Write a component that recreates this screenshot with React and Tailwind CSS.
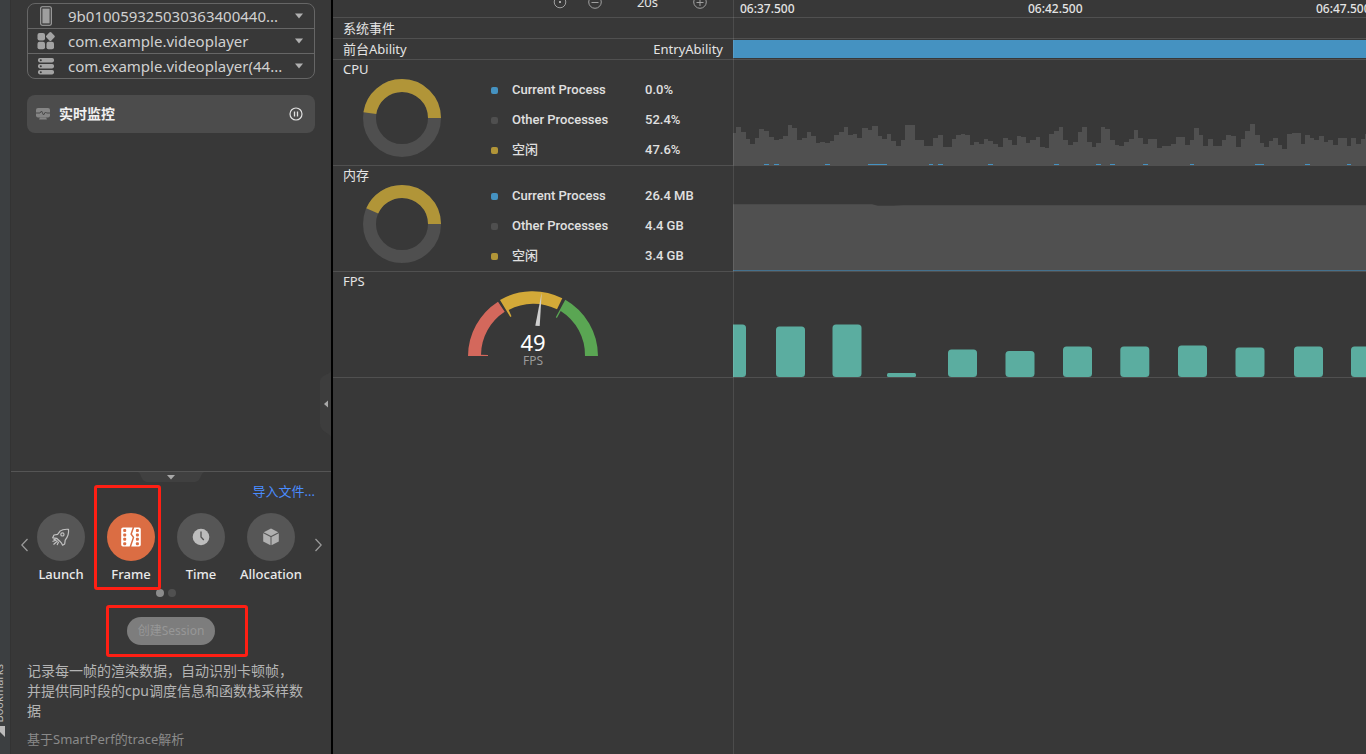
import React from "react";

const ZH = "font-['Noto_Sans','Noto_Sans_CJK_SC',sans-serif]";

// Pairs of [x, top] in thirds of a pixel, measured from the start of the track.
const CPU_STEPS = [
  [0, 400], [9, 382], [24, 396], [39, 417], [51, 431], [66, 414], [78, 386], [93, 392], [108, 412], [123, 420],
  [138, 418], [150, 408], [165, 374], [178, 384], [192, 419], [207, 415], [222, 396], [234, 409], [249, 428],
  [261, 425], [276, 428], [291, 423], [303, 404], [318, 396], [333, 380], [345, 405], [360, 403], [372, 413],
  [387, 384], [405, 390], [417, 377], [435, 407], [447, 417], [462, 403], [474, 423], [489, 437], [504, 421],
  [516, 374], [531, 374], [546, 420], [561, 421], [573, 439], [588, 439], [600, 414], [615, 406], [630, 442],
  [645, 442], [657, 418], [669, 404], [684, 401], [697, 404], [711, 436], [723, 425], [738, 433], [753, 418],
  [765, 424], [780, 433], [795, 442], [810, 415], [825, 421], [837, 436], [852, 408], [864, 412], [879, 428],
  [891, 420], [909, 412], [921, 442], [936, 444], [948, 402], [963, 392], [978, 382], [990, 419], [1005, 434],
  [1020, 425], [1035, 397], [1047, 382], [1062, 425], [1077, 442], [1089, 429], [1104, 382], [1116, 388],
  [1131, 420], [1146, 435], [1158, 439], [1173, 427], [1188, 418], [1203, 389], [1215, 414], [1230, 433],
  [1245, 416], [1260, 416], [1272, 443], [1287, 437], [1299, 437], [1314, 433], [1329, 411], [1344, 411],
  [1356, 436], [1371, 419], [1383, 384], [1398, 406], [1410, 437], [1425, 418], [1440, 438], [1455, 438],
  [1467, 420], [1479, 406], [1494, 408], [1509, 441], [1524, 418], [1536, 392], [1551, 371], [1566, 404],
  [1581, 429], [1593, 442], [1608, 423], [1620, 415], [1635, 434], [1647, 446], [1662, 403], [1677, 400],
  [1692, 400], [1704, 431], [1716, 406], [1731, 414], [1743, 419], [1758, 409], [1773, 426], [1785, 420],
  [1800, 436], [1815, 413], [1830, 415], [1842, 439], [1854, 415], [1869, 431], [1884, 418], [1896, 402],
];

const CPU_MARKS = [
  [31, 5], [41, 5], [92, 5], [135, 19], [196, 4], [205, 5], [255, 5], [321, 5],
  [363, 5], [377, 5], [410, 5], [457, 4], [522, 9], [572, 5], [614, 4],
];

const FPS_BARS = [
  [-16, 52.5], [43, 50.5], [99.5, 52.5], [154, 4], [215, 27.5], [272.5, 26],
  [330, 30.5], [387.3, 30.5], [445, 31.5], [502.5, 29.5], [561, 30.5], [618, 30.5],
];

const cpuPath =
  "M0 106" + CPU_STEPS.map(([x, y]) => `H${x / 3}V${y / 3 - 60}`).join("") + "H633V106Z";

function Caret({ className }) {
  return (
    <svg viewBox="0 0 8 6" aria-hidden="true" className={className}>
      <path d="M0 0.5H8L4 5.5Z" fill="currentColor" />
    </svg>
  );
}

const PhoneIcon = () => (
  <svg viewBox="0 0 18 20" className="h-5 w-[18px]" aria-hidden="true">
    <rect x="3.7" y="0.7" width="10.6" height="18.6" rx="1.5" fill="none" stroke="#a9a9a9" strokeWidth="1.1" />
    <rect x="5.4" y="2.6" width="7.2" height="14.800" fill="#9f9f9f" />
  </svg>
);
const AppsIcon = () => (
  <svg viewBox="0 0 18 18" className="size-[18px]" fill="#a3a3a3" aria-hidden="true">
    <rect x="0.5" y="1" width="7.5" height="7.5" rx="2" />
    <rect x="0.5" y="9.7" width="7.5" height="7.5" rx="2" />
    <rect x="9.5" y="9.7" width="7.5" height="7.5" rx="2" />
    <rect x="9.9" y="1" width="7" height="7" rx="1.5" transform="rotate(45 13.4 4.5)" />
  </svg>
);
const StackIcon = () => (
  <svg viewBox="0 0 18 18" className="size-[18px]" aria-hidden="true">
    {[1, 7, 13].map((y) => (
      <g key={y}>
        <rect x="1" y={y} width="16" height="4.4" rx="1.8" fill="#a3a3a3" />
        <circle cx="3.8" cy={y + 2.2} r="1" fill="#383838" />
      </g>
    ))}
  </svg>
);

const DEVICES = [
  { label: "设备", text: "9b010059325030363400440...", Icon: PhoneIcon },
  { label: "应用", text: "com.example.videoplayer", Icon: AppsIcon },
  { label: "进程", text: "com.example.videoplayer(44...", Icon: StackIcon },
];

const RocketIcon = () => (
  <svg viewBox="0 0 20 20" className="size-5" fill="none" stroke="#c2c2c2" strokeWidth="1.2" strokeLinejoin="round" strokeLinecap="round" aria-hidden="true">
    <path d="M17.500 2.300C14 2.100 11 2.500 9.300 3.900L6.600 7.300 3 8 1.700 10.800 5.600 11.300 8.800 14.200 10.300 15.800 11.600 18.200 13.700 17 14.200 13.200C16.800 10 18 6.500 17.500 2.300Z" />
    <circle cx="11.400" cy="7.400" r="1.600" />
    <path d="M5.300 13.200L2 14.300M6.300 14.200L2.800 17.200M7.400 15.200L6.300 17.600M4.400 12.200L3 12.600" />
  </svg>
);
const FilmIcon = () => (
  <svg viewBox="0 0 20 20" className="size-5" aria-hidden="true">
    <path d="M2 .5H11.600L9.300 7.200 11.700 10.500 8.600 19.500H2A1.800 1.800 0 0 1 .2 17.700V2.300A1.800 1.800 0 0 1 2 .5Z" fill="#fff" />
    <path d="M13.200 .5H18A1.800 1.800 0 0 1 19.800 2.300V17.700A1.800 1.800 0 0 1 18 19.500H10.200L13.300 10.300 11 7Z" fill="#fff" />
    {[2, 6.400, 10.800, 15.200].map((y) => (
      <g key={y} fill="#db6d43">
        <rect x="2.200" y={y} width="3" height="3" rx="1" />
        <rect x="14.900" y={y} width="3" height="3" rx="1" />
      </g>
    ))}
  </svg>
);
const ClockIcon = () => (
  <svg viewBox="0 0 20 20" className="size-5" aria-hidden="true">
    <circle cx="10" cy="10" r="8.300" fill="#bdbdbd" />
    <path d="M10 4.500V10L12.800 13" fill="none" stroke="#555" strokeWidth="1.300" />
  </svg>
);
const CubeIcon = () => (
  <svg viewBox="0 0 20 20" className="size-5" fill="#b0b0b0" aria-hidden="true">
    <path d="M10 1.500L17.300 5.200 10 9 2.700 5.200Z" />
    <path d="M2.200 6.200L9.500 10V18.300L2.200 14.500Z" />
    <path d="M17.800 6.200L10.500 10V18.300L17.800 14.500Z" />
  </svg>
);

const TEMPLATES = [
  { name: "Launch", Icon: RocketIcon },
  { name: "Frame", Icon: FilmIcon, active: true },
  { name: "Time", Icon: ClockIcon },
  { name: "Allocation", Icon: CubeIcon },
];

function Highlight({ className }) {
  return <span aria-hidden="true" className={`pointer-events-none absolute rounded-[3px] border-3 border-[#ff1f14] ${className}`} />;
}

function Sidebar() {
  return (
    <aside className="relative flex w-[320px] shrink-0 flex-col">
      <div className="grow px-4 pt-[3px]">
        <div className="divide-y divide-[#666] rounded-lg border border-[#666]">
          {DEVICES.map(({ label, text, Icon }) => (
            <div key={label} className="relative box-content flex h-6 items-center">
              <span className="flex w-10 shrink-0 justify-center pr-1"><Icon /></span>
              <select aria-label={label} className="h-6 min-w-0 grow appearance-none bg-transparent pr-6 pb-px text-[15px] leading-[22px] text-[#d0d0d0] outline-none">
                <option>{text}</option>
              </select>
              <Caret className="pointer-events-none absolute right-[11px] h-[6px] w-2 text-[#b0b0b0]" />
            </div>
          ))}
        </div>
        <div className="mt-4 flex h-[38px] items-center rounded-lg bg-[#4c4c4c] px-2 text-[#f0f0f0]">
          <svg viewBox="0 0 16 14" className="h-[14px] w-4" aria-hidden="true">
            <rect x="1" y="1" width="14" height="9.500" rx="2" fill="#858585" />
            <path d="M5 10.500H11L12 12.500H4Z" fill="#858585" />
            <path d="M1 6H5L6.500 4 8.500 8 10.500 5 11.500 6H15" fill="none" stroke="#484848" strokeWidth="1" />
          </svg>
          <h2 className="ml-2 grow text-sm font-bold">实时监控</h2>
          <button type="button" aria-label="暂停" className="mr-1">
            <svg viewBox="0 0 14 14" className="size-[14px]" fill="none" stroke="#e0e0e0" aria-hidden="true">
              <circle cx="7" cy="7" r="6" strokeWidth="1.200" />
              <path d="M5.500 4.500V9.500M8.500 4.500V9.500" strokeWidth="1.300" />
            </svg>
          </button>
        </div>
      </div>

      <button type="button" aria-label="收起侧栏" className="absolute top-[370px] right-0 flex h-[68px] w-[11px] items-center justify-end">
        <svg viewBox="0 0 11 68" className="h-[68px] w-[11px]" aria-hidden="true">
          <path d="M11 0C11 5 0 4 0 12V54C0 62 11 63 11 68Z" fill="#3d3d3d" />
          <path d="M8 30.500V37.500L4 34Z" fill="#aaa" />
        </svg>
      </button>

      <section className="flex h-[283px] flex-col border-t border-[#555]">
        <button type="button" aria-label="收起面板" className="-mb-[10px] self-center">
          <svg viewBox="0 0 68 10" className="h-[10px] w-[68px]" aria-hidden="true">
            <path d="M0 0C5 0 3 10 11 10H57C65 10 63 0 68 0Z" fill="#404040" />
            <path d="M30 3H38L34 7.500Z" fill="#a8a8a8" />
          </svg>
        </button>
        <a href="#import" className="mt-[9px] mr-4 self-end text-[13px] leading-5 text-[#4a8cff]">导入文件...</a>
        <div className="mt-3 flex gap-px pr-[9px] pl-[10px]">
          <button type="button" aria-label="上一页" className="flex h-16 items-center">
            <svg viewBox="0 0 7 14" className="h-[14px] w-[7px]" fill="none" stroke="#9a9a9a" strokeWidth="1.300" aria-hidden="true"><path d="M6.500 1L.8 7 6.500 13" /></svg>
          </button>
          <div className="flex gap-[6px]">
            {TEMPLATES.map(({ name, Icon, active }) => (
              <button key={name} type="button" className="relative flex w-16 shrink-0 flex-col items-center">
                <span className={`flex size-12 items-center justify-center rounded-full ${active ? "bg-[#db6d43]" : "bg-[#565656]"}`}><Icon /></span>
                <span className="mt-[3px] text-[13px] leading-5 font-medium text-[#eaeaea]">{name}</span>
                {active && <Highlight className="-top-7 -left-[5px] h-[105px] w-[67px]" />}
              </button>
            ))}
          </div>
          <button type="button" aria-label="下一页" className="ml-auto flex h-16 items-center">
            <svg viewBox="0 0 7 14" className="h-[14px] w-[7px]" fill="none" stroke="#9a9a9a" strokeWidth="1.300" aria-hidden="true"><path d="M.5 1L6.200 7 .5 13" /></svg>
          </button>
        </div>
        <div className="mt-[5px] flex justify-center gap-1 pr-[10px]">
          <span className="size-2 rounded-full bg-[#8c8c8c]" />
          <span className="size-2 rounded-full bg-[#505050]" />
        </div>
        <div className="relative mt-5 self-center">
          <button type="button" className="h-7 w-[88px] rounded-full bg-[#7d7d7d] text-[12px] whitespace-nowrap text-[#979797]">创建Session</button>
          <Highlight className="-top-3 -left-[21px] h-[52px] w-[142px]" />
        </div>
        <p className="mt-4 px-4 text-[14px] leading-5 text-[#b4b4b4]">
          记录每一帧的渲染数据，自动识别卡顿帧，<br />
          并提供同时段的cpu调度信息和函数栈采样数据
        </p>
        <p className="mt-2 px-4 text-[13px] leading-5 text-[#8a8a8a]">基于SmartPerf的trace解析</p>
      </section>
    </aside>
  );
}

function Row({ label, children }) {
  return (
    <div className="flex border-b border-[#505050]">
      <div className="w-[400px] shrink-0">{label}</div>
      <div className="min-w-0 grow">{children}</div>
    </div>
  );
}

function Usage({ title, idle, values }) {
  const names = ["Current Process", "Other Processes", "空闲"];
  const colors = ["bg-[#4592c1]", "bg-[#4f4f4f]", "bg-[#b19538]"];
  return (
    <div className="flex h-[105px] pl-[10px]">
      <div className="w-[148px]">
        <h3 className="text-[13px] leading-[19px]">{title}</h3>
        <svg viewBox="0 0 78 78" className="ml-5 size-[78px]" fill="none" strokeWidth="13" aria-hidden="true">
          <circle cx="39" cy="39" r="32.500" stroke="#4f4f4f" />
          <circle cx="39" cy="39" r="32.500" stroke="#b19538" pathLength="100" strokeDasharray={`${idle} 100`} transform="matrix(1 0 0 -1 0 78)" />
        </svg>
      </div>
      <table className="mt-[15px] h-[90px] text-left font-['Roboto','Noto_Sans_CJK_SC',sans-serif] text-[13px] font-medium text-[#e0e0e0]">
        <tbody>
          {names.map((n, i) => (
            <tr key={n} className="h-[30px]">
              <td className="w-[21px] p-0"><span className={`block size-[7px] rounded-[2px] ${colors[i]}`} /></td>
              <th scope="row" className="w-[133px] p-0 font-medium">{n}</th>
              <td className="p-0">{values[i]}</td>
            </tr>
          ))}
        </tbody>
      </table>
    </div>
  );
}

function Gauge() {
  return (
    <div className="h-[105px]">
      <h3 className="pl-[10px] text-[13px] leading-[19px]">FPS</h3>
      <div className="relative mx-auto w-[130px]">
        <svg viewBox="468 291 130 65" className="h-[65px] w-[130px]" aria-hidden="true">
          <path d="M468 356A65 65 0 0 1 498 301.700L504.700 311.700A52 52 0 0 0 481 354.700L488 355V356Z" fill="#d4685c" />
          <path d="M500 300A65 65 0 0 1 562.300 298.300L557 309.300A52 52 0 0 0 508.700 310L511.500 316.300 510.300 316.900Z" fill="#d3a938" />
          <path d="M565.300 299.700A65 65 0 0 1 598 356H585A52 52 0 0 0 560.700 311L556.900 317.900 555.800 317.300Z" fill="#5aa653" />
          <path d="M541.700 292.500L535.300 325.700 539.700 326Z" fill="#cfcfcf" />
        </svg>
        <p className="absolute inset-x-0 top-[41px] text-center text-[22px] leading-5 text-white">49</p>
        <p className="absolute inset-x-0 top-[62px] text-center text-[12px] leading-4 text-[#9a9a9a]">FPS</p>
      </div>
    </div>
  );
}

function Toolbar() {
  const svg = "size-[14px]";
  return (
    <div className="flex h-[17px] items-end justify-end overflow-hidden pr-[26px] pb-2 text-[13px] leading-[14px]">
      <button type="button" aria-label="定位" className="mr-[21px]">
        <svg viewBox="0 0 14 14" className={svg} fill="none" stroke="#a0a0a0" aria-hidden="true"><circle cx="7" cy="7" r="5.800" /><circle cx="7" cy="7" r="1" fill="#ccc" stroke="none" /></svg>
      </button>
      <button type="button" aria-label="缩小" className="mr-[35px]">
        <svg viewBox="0 0 14 14" className={svg} fill="none" stroke="#a0a0a0" aria-hidden="true"><circle cx="7" cy="7" r="6.300" /><path d="M3.500 7.500H10.500" /></svg>
      </button>
      <span>20s</span>
      <button type="button" aria-label="放大" className="ml-[35px]">
        <svg viewBox="0 0 14 14" className={svg} fill="none" stroke="#a0a0a0" aria-hidden="true"><circle cx="7" cy="7" r="6.300" /><path d="M3.500 7.500H10.500M7 4V11" /></svg>
      </button>
    </div>
  );
}

function Track({ children }) {
  return (
    <svg viewBox="0 0 633 106" preserveAspectRatio="none" className="-mb-px block h-[106px] w-full" aria-hidden="true">
      {children}
    </svg>
  );
}

export default function App() {
  return (
    <div className={`flex h-screen overflow-hidden bg-[#383838] text-[#e4e4e4] ${ZH}`}>
      <nav className="flex w-[11px] shrink-0 flex-col items-start justify-end overflow-hidden border-r border-[#333] bg-[#3c3f41] pb-4 text-[#bbb]">
        <a href="#bookmarks" className="-ml-[10px] flex flex-col items-end gap-1 text-[11px] leading-[18px]">
          <span className="rotate-180 [writing-mode:vertical-rl]">Bookmarks</span>
          <svg viewBox="0 0 6 12" className="mr-[2px] h-3 w-[6px]" aria-hidden="true"><path d="M0 0H5V11L0 6Z" fill="#bbb" /></svg>
        </a>
      </nav>
      <Sidebar />
      <main className="relative min-w-0 grow overflow-hidden border-l-2 border-black">
        <Row label={<Toolbar />}>
          <ol className="flex overflow-hidden pl-[7px] text-[12px] leading-[17px] font-medium">
            {["06:37.500", "06:42.500", "06:47.500"].map((t) => (
              <li key={t} className="w-[288px] shrink-0">{t}</li>
            ))}
          </ol>
        </Row>
        <Row label={<h3 className="pl-[10px] text-[13px] leading-5">系统事件</h3>} />
        <Row
          label={
            <div className="flex justify-between px-[10px] text-[13px] leading-5">
              <h3>前台Ability</h3>
              <span>EntryAbility</span>
            </div>
          }
        >
          <div className="mt-px h-[18px] bg-[#4592c1]" />
        </Row>
        <Row label={<Usage title="CPU" idle={47.6} values={["0.0%", "52.4%", "47.6%"]} />}>
          <Track>
            <path d={cpuPath} fill="#505050" shapeRendering="crispEdges" />
            {CPU_MARKS.map(([x, w]) => (
              <rect key={x} x={x} y="104" width={w} height="1" fill="#4592c1" />
            ))}
          </Track>
        </Row>
        <Row label={<Usage title="内存" idle={43.4} values={["26.4 MB", "4.4 GB", "3.4 GB"]} />}>
          <Track>
            <path d="M0 38.300H139L145 39.700H160L170 39.300H633V106H0Z" fill="#505050" />
            <rect y="104" width="633" height="1" fill="#45708c" />
          </Track>
        </Row>
        <Row label={<Gauge />}>
          <Track>
            {FPS_BARS.map(([x, h]) => (
              <rect key={x} x={x} y={105 - h} width="29" height={h} rx={h < 10 ? 1.500 : 3.500} fill="#5bada0" />
            ))}
          </Track>
        </Row>
        <div aria-hidden="true" className="pointer-events-none absolute inset-y-0 left-[400px] w-px bg-white/10" />
      </main>
    </div>
  );
}
